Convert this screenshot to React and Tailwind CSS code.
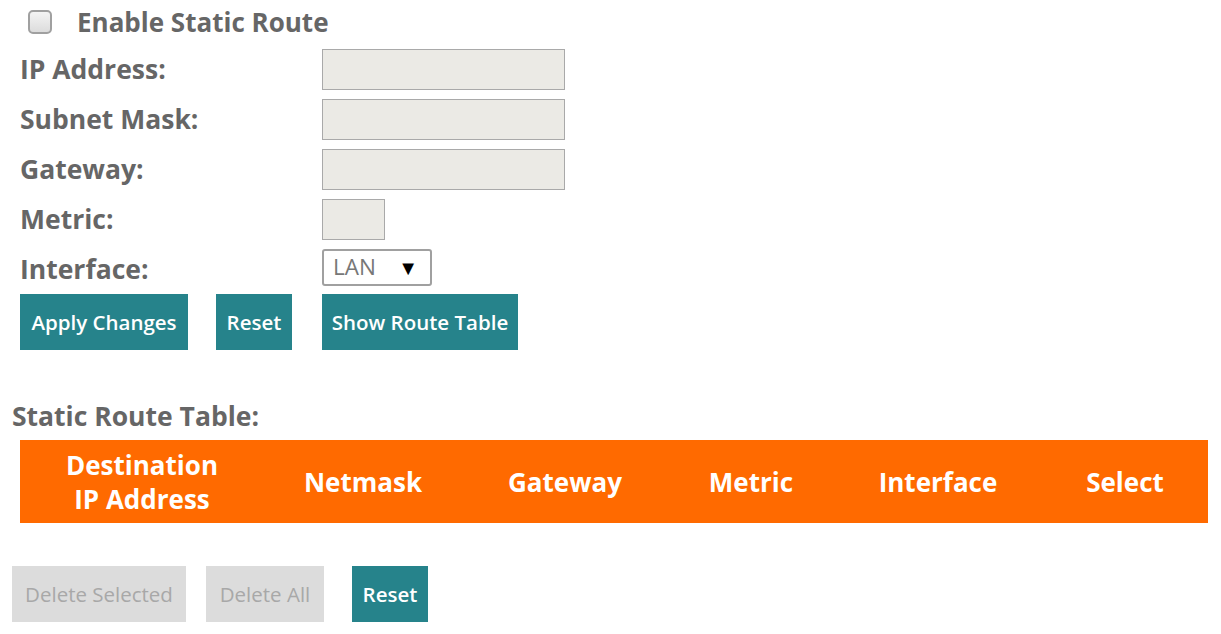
import { useState } from "react";

const labelCls = "w-[302px] shrink-0 text-[26.5px] font-bold text-[#666666] leading-none";
const inputCls = "h-[41px] bg-[#ebeae5] border border-[#a9a9a9] outline-none";

function Row({ label, children }) {
    return (
        <div className="flex items-center h-[50px] pl-[20px]">
            <div className={labelCls}>{label}</div>
            {children}
        </div>
    );
}

export default function App() {
    const [enabled, setEnabled] = useState(false);

    return (
        <div className="w-[1221px] h-[634px] bg-white overflow-hidden" style={{ fontFamily: '"Open Sans", "Noto Sans", sans-serif' }}>
            <div className="flex items-center h-[44px] pl-[28px]">
                <button
                    onClick={() => setEnabled(!enabled)}
                    className="w-[24px] h-[24px] rounded-[5px] border-2 border-[#a0a0a0] bg-gradient-to-b from-[#f4f4f4] to-[#dcdcdc]"
                />
                <span className="ml-[25px] text-[26px] font-bold text-[#666666] leading-none">Enable Static Route</span>
            </div>

            <Row label="IP Address:"><input className={`${inputCls} w-[243px]`} /></Row>
            <Row label="Subnet Mask:"><input className={`${inputCls} w-[243px]`} /></Row>
            <Row label="Gateway:"><input className={`${inputCls} w-[243px]`} /></Row>
            <Row label="Metric:"><input className={`${inputCls} w-[63px]`} /></Row>
            <Row label="Interface:">
                <div className="w-[110px] h-[37px] -mt-[3px] border-2 border-[#a0a0a0] rounded-[3px] bg-white flex items-center justify-between pl-[9px] pr-[12px]">
                    <span className="text-[22.5px] text-[#777777] leading-none">LAN</span>
                    <span className="text-[20px] text-black leading-none">▼</span>
                </div>
            </Row>

            <div className="flex h-[56px]">
                <button className="ml-[20px] w-[168px] h-[56px] bg-[#26838b] text-white text-[20.5px] font-semibold">Apply Changes</button>
                <button className="ml-[28px] w-[76px] h-[56px] bg-[#26838b] text-white text-[20.5px] font-semibold">Reset</button>
                <button className="ml-[30px] w-[196px] h-[56px] bg-[#26838b] text-white text-[20.5px] font-semibold">Show Route Table</button>
            </div>

            <div className="mt-[51px] h-[30px] flex items-center pl-[12px] text-[26.5px] font-bold text-[#666666] leading-none">Static Route Table:</div>

            <div className="mt-[9px] ml-[20px] w-[1188px] h-[83px] bg-[#ff6a00] grid grid-cols-[244px_198px_206px_166px_208px_166px] items-center text-white text-[26px] font-bold leading-[34px] text-center">
                <div>Destination<br />IP Address</div>
                <div>Netmask</div>
                <div>Gateway</div>
                <div>Metric</div>
                <div>Interface</div>
                <div>Select</div>
            </div>

            <div className="mt-[43px] flex h-[56px]">
                <button className="ml-[12px] w-[174px] h-[56px] bg-[#dcdcdc] text-[#a8a8a8] text-[20.5px]">Delete Selected</button>
                <button className="ml-[20px] w-[118px] h-[56px] bg-[#dcdcdc] text-[#a8a8a8] text-[20.5px]">Delete All</button>
                <button className="ml-[28px] w-[76px] h-[56px] bg-[#26838b] text-white text-[20.5px] font-semibold">Reset</button>
            </div>
        </div>
    );
}
